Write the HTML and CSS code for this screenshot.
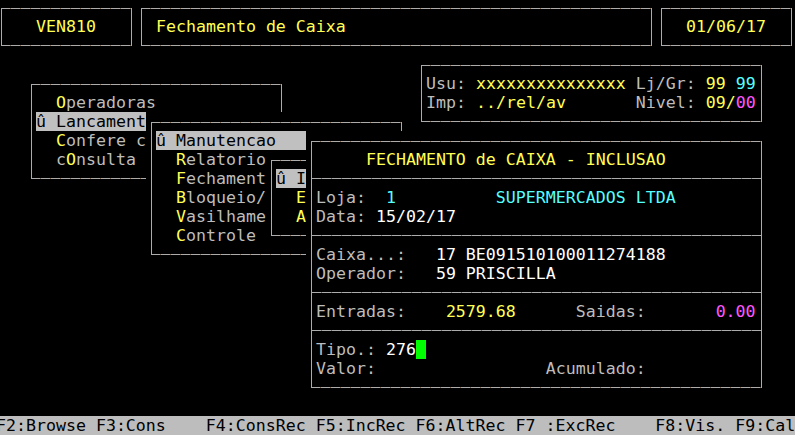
FILE: index.html
```html
<!DOCTYPE html>
<html>
<head>
<meta charset="utf-8">
<title>VEN810 - Fechamento de Caixa</title>
<link rel="stylesheet" href="styles.css">
</head>
<body>
<div class="screen">
  <header class="topbar">
    <div class="win w-prog"><div class="frame"><div class="ln center y">VEN810</div></div></div>
    <div class="win w-title"><div class="frame"><div class="ln y"> Fechamento de Caixa</div></div></div>
    <div class="win w-date"><div class="frame"><div class="ln center y">01/06/17</div></div></div>
  </header>

  <main class="desk">
    <div class="win w-info"><div class="frame">
      <div class="ln">Usu: <span class="y">xxxxxxxxxxxxxxx</span> Lj/Gr: <span class="y">99</span> <span class="c">99</span></div>
      <div class="ln">Imp: <span class="y">../rel/av</span>       Nivel: <span class="y">09/</span><span class="m">00</span></div>
    </div></div>

    <div class="win w-menu1"><div class="frame">
      <div class="ln">  <span class="y">O</span>peradoras</div>
      <div class="ln hl">û Lancament</div>
      <div class="ln">  <span class="y">C</span>onfere c</div>
      <div class="ln">  c<span class="y">O</span>nsulta</div>
    </div></div>

    <div class="win w-menu2"><div class="frame">
      <div class="ln hl">û Manutencao</div>
      <div class="ln">  <span class="y">R</span>elatorio</div>
      <div class="ln">  <span class="y">F</span>echament</div>
      <div class="ln">  <span class="y">B</span>loqueio/</div>
      <div class="ln">  <span class="y">V</span>asilhame</div>
      <div class="ln">  <span class="y">C</span>ontrole</div>
    </div></div>

    <div class="win w-menu3"><div class="frame">
      <div class="ln hl">û I</div>
      <div class="ln">  <span class="y">E</span></div>
      <div class="ln">  <span class="y">A</span></div>
    </div></div>

    <div class="win w-main"><div class="frame">
      <div class="ln y">     FECHAMENTO de CAIXA - INCLUSAO</div>
      <div class="sep"></div>
      <div class="ln">Loja:  <span class="c">1</span>          <span class="c">SUPERMERCADOS LTDA</span></div>
      <div class="ln">Data: <span class="w">15/02/17</span></div>
      <div class="sep"></div>
      <div class="ln">Caixa...:   <span class="w">17 BE091510100011274188</span></div>
      <div class="ln">Operador:   <span class="w">59 PRISCILLA</span></div>
      <div class="sep"></div>
      <div class="ln">Entradas:    <span class="y">2579.68</span>      Saidas:       <span class="m">0.00</span></div>
      <div class="sep"></div>
      <div class="ln">Tipo.: <span class="w">276</span><span class="cur"></span></div>
      <div class="ln">Valor:                 Acumulado:</div>
    </div></div>
  </main>

  <footer class="keys">F2:Browse F3:Cons    F4:ConsRec F5:IncRec F6:AltRec F7 :ExcRec    F8:Vis. F9:Cal</footer>
</div>
</body>
</html>
```

FILE: styles.css
```css
* {
  box-sizing: border-box;
  margin: 0;
  padding: 0;
}

html,
body {
  background: #000;
  overflow: hidden;
}

body {
  width: 795px;
  height: 435px;
}

.screen {
  width: 800px;
  height: 437px;
  margin: -2px 0 0 -4px;
  display: flex;
  flex-direction: column;
  font-family: "DejaVu Sans Mono", "Liberation Mono", monospace;
  font-size: 16.6px;
  line-height: 19px;
  color: #bdbdbd;
}

/* ---------- header boxes ---------- */
.topbar {
  display: flex;
  height: 57px;
  flex: none;
}

.w-prog { width: 140px; }
.w-title { width: 520px; }
.w-date { width: 140px; }

/* ---------- generic window ---------- */
.win {
  background: #000;
  padding: 10px 4px 9px 5px;
}

.frame {
  height: 100%;
  overflow: hidden;
  padding: 8px 5px 9px 4px;
  border: 1px solid #a9a9a9;
  border-image: repeating-linear-gradient(90deg, #acacac 0 9px, #7a6452 9px 10px) 1;
}

.ln {
  height: 19px;
  white-space: pre;
}

.center { text-align: center; }

.sep {
  height: 19px;
  margin: 0 -5px 0 -4px;
  background: repeating-linear-gradient(90deg, #acacac 0 9px, #7a6452 9px 10px) 0 9px / 100% 1px no-repeat;
}

/* ---------- desktop with overlapping windows ---------- */
.desk {
  position: relative;
  flex: 1;
}

.desk .win {
  position: absolute;
}

.w-info  { left: 420px; top: 0;     width: 350px; height: 76px; }
.w-menu1 { left: 30px;  top: 19px;  width: 260px; height: 114px; }
.w-menu2 { left: 150px; top: 57px;  width: 260px; height: 152px; }
.w-menu3 { left: 270px; top: 95px;  width: 200px; height: 95px; }
.w-main  { left: 310px; top: 76px;  width: 460px; height: 266px; }

/* ---------- colours ---------- */
.y { color: #ffff55; }
.c { color: #55ffff; }
.m { color: #ff55ff; }
.w { color: #ffffff; }

.hl {
  background: #c0c0c0;
  color: #000;
}

.cur {
  display: inline-block;
  width: 10px;
  height: 19px;
  vertical-align: top;
  background: #00ff00;
}

/* ---------- function key bar ---------- */
.keys {
  flex: none;
  height: 19px;
  background: #bdbdbd;
  color: #000;
  white-space: pre;
}
```
